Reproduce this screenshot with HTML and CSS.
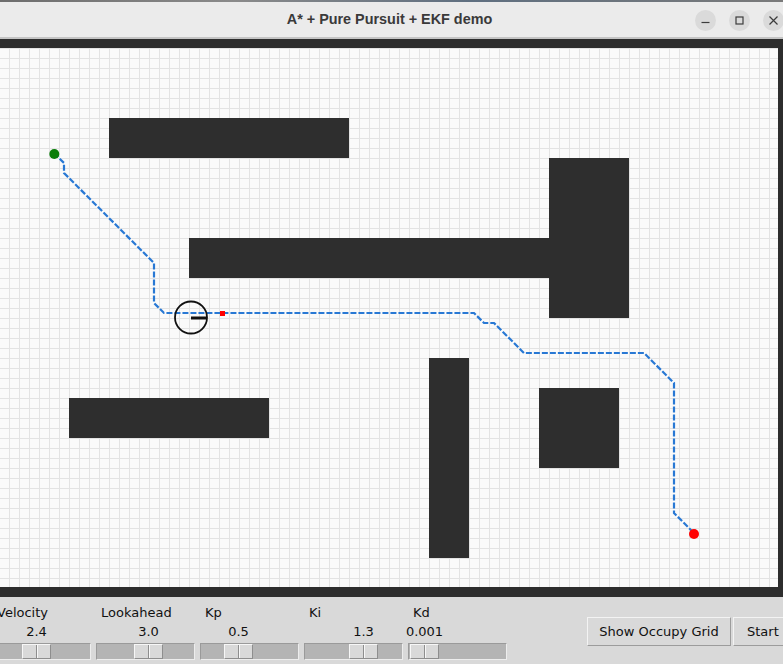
FILE: index.html
```html
<!DOCTYPE html>
<html lang="en">
<head>
<meta charset="utf-8">
<title>A* + Pure Pursuit + EKF demo</title>
<link rel="stylesheet" href="styles.css">
</head>
<body>
<div class="window">
  <div class="desk-strip"></div>
  <header class="titlebar">
    <div class="tb-spacer"></div>
    <h1 class="title">A* + Pure Pursuit + EKF demo</h1>
    <div class="win-btns">
      <span class="win-btn">
        <svg width="21" height="21" viewBox="0 0 21 21"><path d="M6.5 12.5h8" stroke="#3c3c3c" stroke-width="1.2" fill="none"/></svg>
      </span>
      <span class="win-btn">
        <svg width="21" height="21" viewBox="0 0 21 21"><rect x="7" y="7" width="7" height="7" stroke="#3c3c3c" stroke-width="1.2" fill="none"/></svg>
      </span>
      <span class="win-btn">
        <svg width="21" height="21" viewBox="0 0 21 21"><path d="M6.5 6.5l8 8M14.5 6.5l-8 8" stroke="#3c3c3c" stroke-width="1.2" fill="none"/></svg>
      </span>
    </div>
  </header>

  <main class="frame">
    <svg class="canvas" width="779" height="539" viewBox="0 0 779 539">
      <defs>
        <pattern id="grid" width="10" height="10" patternUnits="userSpaceOnUse">
          <rect width="10" height="10" fill="#fafafa"/>
          <rect width="1" height="10" fill="#e3e3e3"/>
          <rect width="10" height="1" fill="#e3e3e3"/>
        </pattern>
      </defs>
      <rect width="779" height="539" fill="url(#grid)"/>
      <g class="obstacles" fill="#2e2e2e">
        <rect x="110" y="70" width="240" height="40"/>
        <rect x="190" y="190" width="360" height="40"/>
        <rect x="550" y="110" width="80" height="160"/>
        <rect x="70" y="350" width="200" height="40"/>
        <rect x="430" y="310" width="40" height="200"/>
        <rect x="540" y="340" width="80" height="80"/>
      </g>
      <polyline class="path" points="55,105 65,115 65,125 155,215 155,255 165,265 475,265 485,275 495,275 525,305 645,305 675,335 675,465 695,485"/>
      <circle cx="55.3" cy="106" r="5" fill="#0b7d0b"/>
      <circle cx="695" cy="486" r="5" fill="#ff0000"/>
      <rect x="221" y="263" width="5" height="5" fill="#ff0000"/>
      <circle cx="192" cy="269.5" r="16" fill="none" stroke="#111" stroke-width="1.8"/>
      <line x1="192" y1="270" x2="208" y2="270" stroke="#111" stroke-width="3"/>
    </svg>
  </main>

  <footer class="panel">
    <div class="scale" style="--pos:30px">
      <div class="scale-label">Velocity</div>
      <div class="scale-value"><span>2.4</span></div>
      <div class="trough"><span class="handle"></span></div>
    </div>
    <div class="scale" style="--pos:38px">
      <div class="scale-label">Lookahead</div>
      <div class="scale-value"><span>3.0</span></div>
      <div class="trough"><span class="handle"></span></div>
    </div>
    <div class="scale" style="--pos:24px">
      <div class="scale-label">Kp</div>
      <div class="scale-value"><span>0.5</span></div>
      <div class="trough"><span class="handle"></span></div>
    </div>
    <div class="scale" style="--pos:45px">
      <div class="scale-label">Ki</div>
      <div class="scale-value"><span>1.3</span></div>
      <div class="trough"><span class="handle"></span></div>
    </div>
    <div class="scale" style="--pos:2px">
      <div class="scale-label">Kd</div>
      <div class="scale-value"><span>0.001</span></div>
      <div class="trough"><span class="handle"></span></div>
    </div>
    <button class="btn btn-grid">Show Occupy Grid</button>
    <button class="btn btn-start">Start</button>
  </footer>
</div>
</body>
</html>
```

FILE: styles.css
```css
html, body {
  margin: 0;
  padding: 0;
  width: 783px;
  height: 664px;
  overflow: hidden;
  background: #d9d9d9;
}

.window {
  width: 783px;
  height: 664px;
  display: flex;
  flex-direction: column;
  overflow: hidden;
}

.desk-strip {
  height: 2px;
  background: linear-gradient(90deg, #6d6d6d 0%, #8a8a8a 30%, #5f6f80 60%, #7a7a7a 100%);
}

.titlebar {
  height: 35px;
  background: #ebebeb;
  border-bottom: 2px solid #c4c4c4;
  display: grid;
  grid-template-columns: 1fr auto 1fr;
  align-items: center;
}

.title {
  margin: 0;
  font-family: "Liberation Sans", Arial, sans-serif;
  font-weight: bold;
  font-size: 14.4px;
  color: #3a3a3a;
  line-height: 1;
  padding-right: 4px;
}

.win-btns {
  justify-self: end;
  display: flex;
  gap: 13px;
  margin-right: -1px;
  padding-top: 1px;
}

.win-btn {
  width: 21px;
  height: 21px;
  border-radius: 50%;
  background: #dadada;
  display: flex;
}

.frame {
  height: 539px;
  background: #2d2d2d;
  padding: 9px 0 10px 0;
  display: flex;
  overflow: hidden;
}

.canvas {
  display: block;
  margin-left: -1px;
  flex: none;
}

.path {
  fill: none;
  stroke: #2878d4;
  stroke-width: 2.2;
  stroke-dasharray: 6 2;
}

.panel {
  flex: 1;
  background: #d9d9d9;
  display: flex;
  align-items: flex-start;
  margin-left: -8px;
  font-family: "DejaVu Sans", sans-serif;
  font-size: 13px;
  color: #111;
}

.scale {
  width: 99px;
  margin-right: 5px;
  padding-top: 8px;
  display: flex;
  flex-direction: column;
  flex: none;
}

.scale-label {
  line-height: 15px;
  padding-left: 5px;
  white-space: nowrap;
}

.scale-value {
  line-height: 15px;
  margin-top: 4px;
  margin-left: var(--pos);
  width: 29px;
  display: flex;
  justify-content: center;
  white-space: nowrap;
}

.trough {
  margin-top: 4px;
  height: 15px;
  background: #b4b4b4;
  border: 1px solid;
  border-color: #9a9a9a #ededed #ededed #9a9a9a;
  display: flex;
}

.handle {
  margin-left: calc(var(--pos) - 1px);
  width: 27px;
  height: 13px;
  background: #d9d9d9;
  border: 1px solid;
  border-color: #f7f7f7 #8e8e8e #8e8e8e #f7f7f7;
  display: flex;
  justify-content: center;
}

.handle::before {
  content: "";
  width: 1px;
  height: 13px;
  background: #8e8e8e;
  border-right: 1px solid #f7f7f7;
}

.btn {
  align-self: center;
  box-sizing: border-box;
  height: 29px;
  margin-top: 1px;
  font-family: "DejaVu Sans", sans-serif;
  font-size: 13px;
  color: #111;
  background: #d9d9d9;
  border: 1px solid;
  border-color: #f3f3f3 #9c9c9c #9c9c9c #f3f3f3;
  padding: 0;
  white-space: nowrap;
  flex: none;
}

.btn-grid {
  margin-left: 75px;
  width: 144px;
  text-align: center;
}

.btn-start {
  margin-left: 2px;
  width: 62px;
  text-align: left;
  padding-left: 13px;
}
```
